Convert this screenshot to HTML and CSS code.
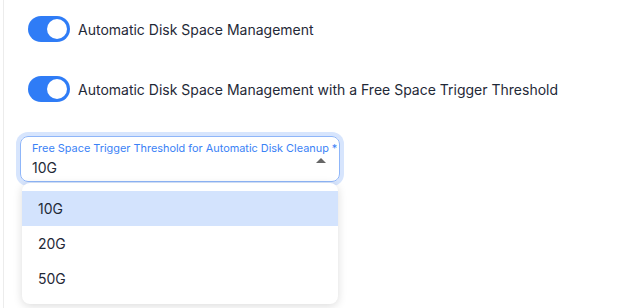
FILE: index.html
```html
<!DOCTYPE html>
<html lang="en">
<head>
  <meta charset="UTF-8">
  <title>Disk Cleanup Settings</title>
  <link rel="stylesheet" href="styles.css">
</head>
<body>
  <section class="panel">
    <div class="switch-row">
      <span class="switch on"><span class="knob"></span></span>
      <span class="switch-label">Automatic Disk Space Management</span>
    </div>

    <div class="switch-row second">
      <span class="switch on"><span class="knob"></span></span>
      <span class="switch-label">Automatic Disk Space Management with a Free Space Trigger Threshold</span>
    </div>

    <div class="field">
      <label class="field-label">Free Space Trigger Threshold for Automatic Disk Cleanup<span class="req">*</span></label>
      <div class="field-value">10G</div>
      <span class="caret"></span>

      <ul class="menu">
        <li class="menu-item active">10G</li>
        <li class="menu-item">20G</li>
        <li class="menu-item">50G</li>
      </ul>
    </div>
  </section>
</body>
</html>
```

FILE: styles.css
```css
body {
  margin: 0;
  font-family: Inter, "Noto Sans", sans-serif;
  color: #1f2937;
  background-color: #fff;
}

.panel {
  margin-left: 3px;
  border-left: 1px solid #ececec;
  height: 308px;
  padding: 16px 0 0 16px;
  box-sizing: border-box;
}

.switch-row {
  display: flex;
  align-items: center;
  gap: 8px;
  height: 26px;
  padding-left: 8px;
}

.switch-row.second {
  margin-top: 34px;
}

.switch {
  width: 42px;
  height: 26px;
  border-radius: 13px;
  background-color: #2f7cf6;
  display: flex;
  align-items: center;
  justify-content: flex-end;
  padding: 0 3px;
  box-sizing: border-box;
}

.knob {
  width: 20px;
  height: 20px;
  border-radius: 50%;
  background-color: #fff;
}

.switch-label {
  font-size: 14px;
  color: #1f2937;
}

.field {
  position: relative;
  margin-top: 34px;
  width: 320px;
  height: 46px;
  border: 1px solid #8fb6f9;
  border-radius: 8px;
  box-shadow: 0 0 0 4px #d7e5fd;
  padding: 4px 11px 0;
  box-sizing: border-box;
}

.field-label {
  display: block;
  font-size: 10.9px;
  line-height: 14px;
  color: #3b82f6;
  white-space: nowrap;
}

.req {
  margin-left: 3px;
}

.field-value {
  font-size: 14px;
  line-height: 20px;
  margin-top: 3px;
}

.caret {
  position: absolute;
  right: 13px;
  top: 21px;
  width: 0;
  height: 0;
  border-left: 5px solid transparent;
  border-right: 5px solid transparent;
  border-bottom: 5px solid #666;
}

.menu {
  position: absolute;
  top: 46px;
  left: 1px;
  width: 316px;
  margin: 0;
  padding: 8px 0;
  list-style: none;
  background-color: #fff;
  border-radius: 8px;
  box-shadow: 0 2px 10px rgba(0, 0, 0, 0.14);
  z-index: 2;
}

.menu-item {
  height: 35px;
  line-height: 35px;
  padding-left: 16px;
  font-size: 14px;
  color: #1f2937;
}

.menu-item.active {
  background-color: #d3e3fd;
}
```
